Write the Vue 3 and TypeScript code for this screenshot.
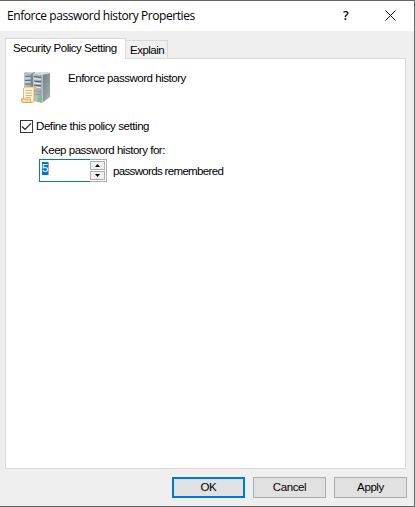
<script setup lang="ts">
import { ref } from 'vue'

const tabs = ['Security Policy Setting', 'Explain']
const activeTab = ref(0)
const defined = ref(true)
const count = ref(5)

function step(amount: number) {
  count.value = Math.min(24, Math.max(0, count.value + amount))
}
</script>

<template>
  <main class="dialog">
    <header class="titlebar">
      <span class="title">Enforce password history Properties</span>
      <span class="help">?</span>
      <svg class="close" width="11" height="11" viewBox="0 0 11 11">
        <path d="M.5 .5L10.500 10.500M10.500 .5L.5 10.500" stroke="#111" fill="none" />
      </svg>
    </header>
    <nav class="tabs">
      <div
        v-for="(tab, i) in tabs"
        :key="tab"
        class="tab"
        :class="{ active: i === activeTab, second: i === 1 }"
        @click="activeTab = i"
      ><span>{{ tab }}</span></div>
    </nav>
    <section class="panel">
      <div class="heading">
        <svg class="server" width="32" height="34" viewBox="0 0 32 34">
          <defs>
            <linearGradient id="front" x1="0" x2="1">
              <stop offset="0" stop-color="#bcc9d0" />
              <stop offset="1" stop-color="#94a4ad" />
            </linearGradient>
            <linearGradient id="side" x1="0" x2="1" y1="0" y2="1">
              <stop offset="0" stop-color="#6f7b82" />
              <stop offset="1" stop-color="#a9b1b5" />
            </linearGradient>
          </defs>
          <path d="M3 2L6 1H14V25H3Z" fill="#77858e" />
          <path d="M3 2.500L10 3V25H3Z" fill="url(#front)" />
          <path d="M3 2.500L6 1H14L10 3Z" fill="#cdd5d9" />
          <path d="M4 5.500H9.500M4 9.500H9.500M4 13H9.500" stroke="#5f7079" />
          <path d="M4 7H9.500M4 11H9.500" stroke="#e9eff2" stroke-width=".8" />
          <path d="M12 2.500L16 1H27L29 2L21 4Z" fill="#d3dbde" />
          <path d="M12 2.500L21 4V32L12 30Z" fill="url(#front)" />
          <path d="M21 4L29 2V26L21 32Z" fill="url(#side)" />
          <path d="M21.300 4V31.500" stroke="#dbe2e5" stroke-width=".8" />
          <path d="M13 5.700L20 6.500M13 10L20 10.800M13 14L20 14.800" stroke="#52636d" stroke-width="1.200" />
          <path d="M13 7.500L20 8.300M13 12L20 12.800M13 16L20 16.800" stroke="#edf3f5" />
          <path d="M13 20L20 20.800M13 23L20 23.800" stroke="#7e8e97" stroke-width=".7" />
          <circle cx="19" cy="28.300" r="1.500" fill="#51df22" />
          <path d="M2.500 17.500Q3 16 5 16H14Q15.800 16.300 15 18.500H13V29Q13 31.500 11 31.500H2Q-.2 31 .5 28H2.500Z" fill="#fff2cc" stroke="#cfa866" stroke-width=".8" />
          <path d="M.5 28H9.500Q9 31 11 31.500H2Q-.2 31 .5 28M13 18.500Q12.500 16.500 14 16Q15.800 16.500 15 18.500Z" fill="#f5dda0" stroke="#cba25a" stroke-width=".8" />
          <path d="M4.500 19.500H11M4.500 22H11M4.500 24.500H11M4.500 26.500H10" stroke="#c7aa79" stroke-width=".8" />
        </svg>
        <span class="name">Enforce password history</span>
      </div>
      <div class="define" @click="defined = !defined">
        <span class="checkbox">
          <svg v-if="defined" width="11" height="11" viewBox="0 0 11 11">
            <path d="M1 5.500L4 8.500L10 2.300" fill="none" stroke="#222" stroke-width="1.200" />
          </svg>
        </span>
        <span class="define-label">Define this policy setting</span>
      </div>
      <div class="keep"><span>Keep password history for:</span></div>
      <div class="field">
        <div class="number">
          <div class="value"><span class="selected">{{ count }}</span></div>
          <div class="spinner">
            <div class="step" @click="step(1)">
              <svg width="5" height="3" viewBox="0 0 5 3"><path d="M0 3L2.500 0L5 3Z" /></svg>
            </div>
            <div class="step" @click="step(-1)">
              <svg width="5" height="3" viewBox="0 0 5 3"><path d="M0 0L2.500 3L5 0Z" /></svg>
            </div>
          </div>
        </div>
        <span class="unit">passwords remembered</span>
      </div>
    </section>
    <footer class="actions">
      <div class="button primary"><span>OK</span></div>
      <div class="button"><span>Cancel</span></div>
      <div class="button"><span>Apply</span></div>
    </footer>
  </main>
</template>

<style>
body { margin: 0; }
</style>

<style scoped>
* { box-sizing: border-box; }
.dialog {
  width: 415px;
  height: 507px;
  display: flex;
  flex-direction: column;
  background: #efefef;
  border: 1px solid #666;
  border-left: 0;
  font: 11.5px/14px "Liberation Sans", Arial, sans-serif;
  letter-spacing: -0.47px;
  color: #000;
  white-space: nowrap;
  overflow: hidden;
  user-select: none;
}
svg { display: block; flex: none; }
.titlebar {
  height: 30px;
  flex: none;
  display: flex;
  align-items: center;
  padding: 0 18px 1px 7px;
  background: #fff;
  font: 12px/17px "Open Sans", "Noto Sans", sans-serif;
  letter-spacing: -0.43px;
}
.title { flex: 1; }
.help { width: 8px; margin-right: 34px; font-size: 12.5px; font-weight: 600; }
.tabs {
  height: 27px;
  flex: none;
  display: flex;
  align-items: flex-end;
  padding-left: 5px;
}
.tab {
  border: 1px solid #d9d9d9;
  border-bottom: 0;
  background: #f0f0f0;
}
.tab.active {
  width: 121px;
  height: 21px;
  margin-bottom: -1px;
  padding: 2px 0 0 7px;
  background: #fff;
  position: relative;
}
.tab.second {
  width: 42px;
  height: 18px;
  padding: 2px 0 0 4px;
  border-left: 0;
  letter-spacing: -0.5px;
}
.panel {
  width: 401px;
  height: 411px;
  flex: none;
  margin-left: 5px;
  padding: 12px 0 0 14px;
  border: 1px solid #d9d9d9;
  background: #fff;
}
.heading { display: flex; height: 49px; }
.server { margin-left: 1px; }
.name { margin-left: 15px; }
.define { display: flex; align-items: center; height: 13px; }
.checkbox { width: 13px; height: 13px; flex: none; border: 1px solid #333; }
.define-label { margin: -2px 0 0 3px; letter-spacing: -0.42px; }
.keep { margin: 10px 0 0 21px; height: 16px; }
.field { display: flex; margin-left: 19px; }
.number {
  width: 68px;
  height: 23px;
  display: flex;
  border: 1px solid #adadad;
}
.value {
  width: 51px;
  height: 23px;
  flex: none;
  margin: -1px 0 0 -1px;
  padding: 2px 0 0 2px;
  border: 1px solid #0078d7;
  border-right: 0;
}
.selected {
  display: block;
  width: 7px;
  height: 13px;
  line-height: 13px;
  border-right: 1px solid #ff9144;
  background: #0078d7;
  color: #fff;
}
.spinner {
  flex: 1;
  display: flex;
  flex-direction: column;
  gap: 1px;
  padding: 1px 1px 1px 0;
}
.step {
  flex: 1;
  display: flex;
  align-items: center;
  justify-content: center;
  border: 1px solid #adadad;
  background: #f0f0f0;
}
.unit { margin: 5px 0 0 6px; letter-spacing: -0.66px; }
.actions { display: flex; gap: 8px; padding: 8px 0 0 172px; }
.button {
  width: 73px;
  height: 21px;
  display: flex;
  justify-content: center;
  align-items: center;
  padding-bottom: 1px;
  border: 1px solid #adadad;
  background: #e1e1e1;
  letter-spacing: -0.4px;
}
.button.primary { padding-bottom: 1px; border: 2px solid #0078d7; }
</style>
